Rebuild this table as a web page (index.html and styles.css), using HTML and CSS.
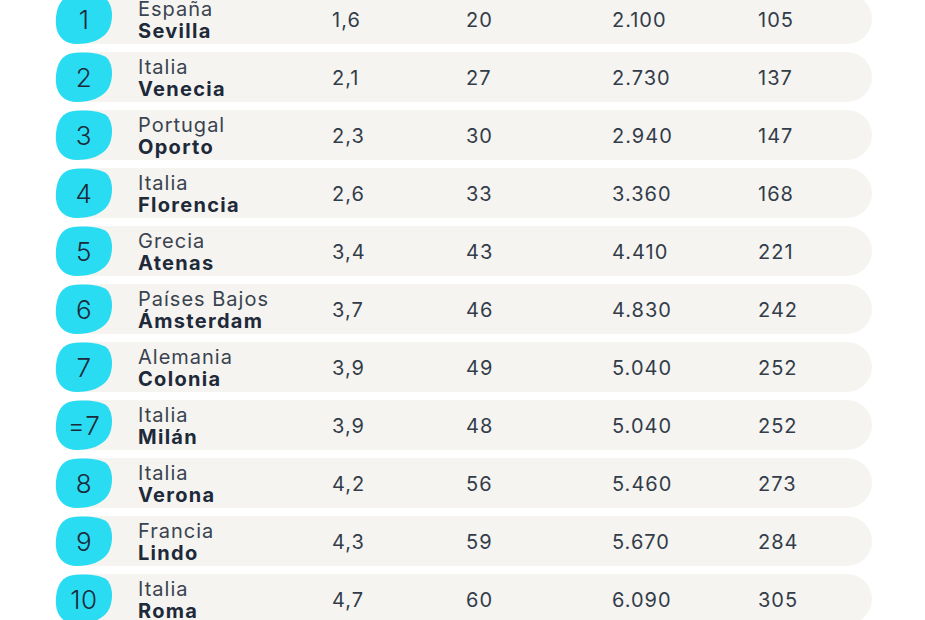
FILE: index.html
```html
<!DOCTYPE html>
<html lang="es">
<head>
<meta charset="utf-8">
<link rel="stylesheet" href="styles.css">
</head>
<body>
<svg width="0" height="0" class="defs">
  <defs>
    <symbol id="blob" viewBox="0 0 58 50">
      <path d="M14 2 C25 -0.5 45 0 52 6 C58 12 59 27 53 37 C47 46 35 50 22 50 C10 50 2 43 1 31 C0 18 4 5 14 2 Z"/>
    </symbol>
  </defs>
</svg>
<div class="list">
  <div class="row"><div class="rank"><svg class="blob"><use href="#blob"/></svg><span>1</span></div><div class="place"><span class="country">España</span><span class="city">Sevilla</span></div><div class="num">1,6</div><div class="num">20</div><div class="num">2.100</div><div class="num">105</div></div>
  <div class="row"><div class="rank"><svg class="blob"><use href="#blob"/></svg><span>2</span></div><div class="place"><span class="country">Italia</span><span class="city">Venecia</span></div><div class="num">2,1</div><div class="num">27</div><div class="num">2.730</div><div class="num">137</div></div>
  <div class="row"><div class="rank"><svg class="blob"><use href="#blob"/></svg><span>3</span></div><div class="place"><span class="country">Portugal</span><span class="city">Oporto</span></div><div class="num">2,3</div><div class="num">30</div><div class="num">2.940</div><div class="num">147</div></div>
  <div class="row"><div class="rank"><svg class="blob"><use href="#blob"/></svg><span>4</span></div><div class="place"><span class="country">Italia</span><span class="city">Florencia</span></div><div class="num">2,6</div><div class="num">33</div><div class="num">3.360</div><div class="num">168</div></div>
  <div class="row"><div class="rank"><svg class="blob"><use href="#blob"/></svg><span>5</span></div><div class="place"><span class="country">Grecia</span><span class="city">Atenas</span></div><div class="num">3,4</div><div class="num">43</div><div class="num">4.410</div><div class="num">221</div></div>
  <div class="row"><div class="rank"><svg class="blob"><use href="#blob"/></svg><span>6</span></div><div class="place"><span class="country">Países Bajos</span><span class="city">Ámsterdam</span></div><div class="num">3,7</div><div class="num">46</div><div class="num">4.830</div><div class="num">242</div></div>
  <div class="row"><div class="rank"><svg class="blob"><use href="#blob"/></svg><span>7</span></div><div class="place"><span class="country">Alemania</span><span class="city">Colonia</span></div><div class="num">3,9</div><div class="num">49</div><div class="num">5.040</div><div class="num">252</div></div>
  <div class="row"><div class="rank"><svg class="blob"><use href="#blob"/></svg><span>=7</span></div><div class="place"><span class="country">Italia</span><span class="city">Milán</span></div><div class="num">3,9</div><div class="num">48</div><div class="num">5.040</div><div class="num">252</div></div>
  <div class="row"><div class="rank"><svg class="blob"><use href="#blob"/></svg><span>8</span></div><div class="place"><span class="country">Italia</span><span class="city">Verona</span></div><div class="num">4,2</div><div class="num">56</div><div class="num">5.460</div><div class="num">273</div></div>
  <div class="row"><div class="rank"><svg class="blob"><use href="#blob"/></svg><span>9</span></div><div class="place"><span class="country">Francia</span><span class="city">Lindo</span></div><div class="num">4,3</div><div class="num">59</div><div class="num">5.670</div><div class="num">284</div></div>
  <div class="row"><div class="rank"><svg class="blob"><use href="#blob"/></svg><span>10</span></div><div class="place"><span class="country">Italia</span><span class="city">Roma</span></div><div class="num">4,7</div><div class="num">60</div><div class="num">6.090</div><div class="num">305</div></div>
</div>
</body>
</html>
```
FILE: styles.css
```css
html, body {
  margin: 0;
  padding: 0;
  background: #ffffff;
  overflow: hidden;
}
body {
  font-family: "Inter", "Noto Sans", sans-serif;
  color: #1f2a3a;
}
.defs {
  display: block;
  width: 0;
  height: 0;
}
.list {
  display: flex;
  flex-direction: column;
  gap: 8px;
  margin-top: -6px;
  padding-left: 55px;
  width: 817px;
}
.row {
  display: grid;
  grid-template-columns: 83px 194px 134px 146px 146px 1fr;
  align-items: center;
  height: 50px;
  border-radius: 0 25px 25px 0;
  background: linear-gradient(90deg, transparent 28px, #f5f4f1 28px);
}
.rank {
  position: relative;
  width: 58px;
  height: 50px;
  display: flex;
  align-items: center;
  justify-content: center;
}
.blob {
  position: absolute;
  left: 0;
  top: 0;
  width: 58px;
  height: 50px;
  fill: #29dcf2;
}
.rank span {
  position: relative;
  font-size: 26px;
  font-weight: 300;
  color: #1c2a3a;
  letter-spacing: 0.5px;
}
.place {
  display: flex;
  flex-direction: column;
  line-height: 22px;
  font-size: 20px;
  padding-top: 1px;
}
.country {
  font-weight: 400;
  color: #3a4350;
  letter-spacing: 1px;
}
.city {
  font-weight: 700;
  color: #1e2939;
  letter-spacing: 1.3px;
}
.num {
  font-size: 20px;
  color: #333c49;
  padding-top: 2px;
  letter-spacing: 1px;
}
```
